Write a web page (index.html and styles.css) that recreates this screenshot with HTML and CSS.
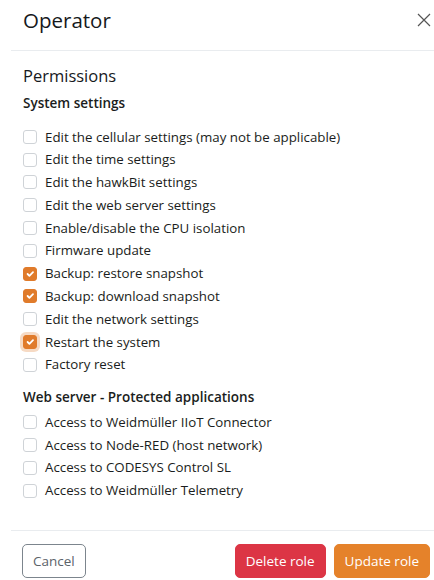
FILE: index.html
```html
<!DOCTYPE html>
<html lang="en">
<head>
<meta charset="utf-8">
<title>Operator</title>
<link rel="stylesheet" href="styles.css">
</head>
<body>
<div class="modal">
  <header class="modal-header">
    <h1 class="modal-title">Operator</h1>
    <button class="btn-close" type="button" aria-label="Close">
      <svg viewBox="0 0 14 14" width="14" height="14"><path d="M1 1L13 13M13 1L1 13" stroke="#555" stroke-width="1.2" fill="none"/></svg>
    </button>
  </header>
  <div class="modal-body">
    <h2 class="section-title">Permissions</h2>
    <section class="group">
      <h3 class="group-title">System settings</h3>
      <ul class="checks">
        <li><label class="check"><input type="checkbox"><span>Edit the cellular settings (may not be applicable)</span></label></li>
        <li><label class="check"><input type="checkbox"><span>Edit the time settings</span></label></li>
        <li><label class="check"><input type="checkbox"><span>Edit the hawkBit settings</span></label></li>
        <li><label class="check"><input type="checkbox"><span>Edit the web server settings</span></label></li>
        <li><label class="check"><input type="checkbox"><span>Enable/disable the CPU isolation</span></label></li>
        <li><label class="check"><input type="checkbox"><span>Firmware update</span></label></li>
        <li><label class="check"><input type="checkbox" checked><span>Backup: restore snapshot</span></label></li>
        <li><label class="check"><input type="checkbox" checked><span>Backup: download snapshot</span></label></li>
        <li><label class="check"><input type="checkbox"><span>Edit the network settings</span></label></li>
        <li><label class="check"><input type="checkbox" class="focused" checked><span>Restart the system</span></label></li>
        <li><label class="check"><input type="checkbox"><span>Factory reset</span></label></li>
      </ul>
    </section>
    <section class="group group--apps">
      <h3 class="group-title">Web server - Protected applications</h3>
      <ul class="checks">
        <li><label class="check"><input type="checkbox"><span>Access to Weidmüller IIoT Connector</span></label></li>
        <li><label class="check"><input type="checkbox"><span>Access to Node-RED (host network)</span></label></li>
        <li><label class="check"><input type="checkbox"><span>Access to CODESYS Control SL</span></label></li>
        <li><label class="check"><input type="checkbox"><span>Access to Weidmüller Telemetry</span></label></li>
      </ul>
    </section>
  </div>
  <footer class="modal-footer">
    <button class="btn btn-outline" type="button">Cancel</button>
    <div class="actions">
      <button class="btn btn-danger" type="button">Delete role</button>
      <button class="btn btn-warning" type="button">Update role</button>
    </div>
  </footer>
</div>
</body>
</html>
```

FILE: styles.css
```css
html, body {
  margin: 0;
  padding: 0;
  background: #fff;
  overflow: hidden;
}

body {
  font-family: "Open Sans", "Noto Sans", sans-serif;
  color: #1a1d20;
}

.modal {
  margin: -10px 0 0 11px;
  width: 431px;
  background: #fff;
}

.modal-header {
  display: flex;
  align-items: center;
  justify-content: space-between;
  padding: 15px 12px;
  border-bottom: 1px solid #e9ecef;
}

.modal-title {
  margin: 0;
  font-size: 20.5px;
  font-weight: 500;
  line-height: 30px;
  color: #16191c;
}

.btn-close {
  border: 0;
  background: none;
  padding: 0;
  margin-right: -1px;
  width: 14px;
  height: 14px;
  display: flex;
}

.modal-body {
  padding: 13px 12px 27px;
}

.section-title {
  margin: 0 0 5px;
  font-size: 16.5px;
  font-weight: 500;
  line-height: 24px;
  color: #16191c;
}

.group-title {
  margin: 0 0 12.5px;
  font-size: 13.5px;
  font-weight: 600;
  line-height: 21px;
}

.group--apps {
  margin-top: 11.5px;
}

.group--apps .group-title {
  margin-bottom: 4px;
}

.checks {
  list-style: none;
  margin: 0;
  padding: 0;
}

.checks li {
  margin-bottom: 2px;
}

.check {
  display: flex;
  align-items: center;
  gap: 8px;
  font-size: 13.3px;
  line-height: 20.8px;
  color: #1a1d20;
}

.check input {
  appearance: none;
  -webkit-appearance: none;
  margin: 0;
  width: 14px;
  height: 14px;
  border: 1px solid #cfd3d7;
  border-radius: 3px;
  background: #fff;
  flex: none;
}

.check input:checked {
  border-color: #e07b2b;
  background-color: #e07b2b;
  background-image: url("data:image/svg+xml,%3Csvg xmlns='http://www.w3.org/2000/svg' viewBox='0 0 20 20'%3E%3Cpath fill='none' stroke='%23fff' stroke-linecap='round' stroke-linejoin='round' stroke-width='3' d='M6 10l3 3l6-6'/%3E%3C/svg%3E");
  background-size: 100% 100%;
}

.check input.focused {
  box-shadow: 0 0 0 3px rgba(224, 123, 43, 0.28);
}

.modal-footer {
  display: flex;
  align-items: center;
  justify-content: space-between;
  padding: 13px 12px 12px 11px;
  border-top: 1px solid #e9ecef;
}

.actions {
  display: flex;
  gap: 8px;
}

.btn {
  font-family: inherit;
  font-size: 13.5px;
  line-height: 22px;
  height: 34px;
  padding: 0 10px;
  border-radius: 5px;
  border: 1px solid transparent;
  cursor: pointer;
}

.btn-outline {
  border-color: #7c858d;
  color: #5c636a;
  background: #fff;
  padding: 0 10px;
}

.btn-danger {
  background: #dc3545;
  border-color: #dc3545;
  color: #fff;
}

.btn-warning {
  background: #e5822a;
  border-color: #e5822a;
  color: #fff;
}
```
